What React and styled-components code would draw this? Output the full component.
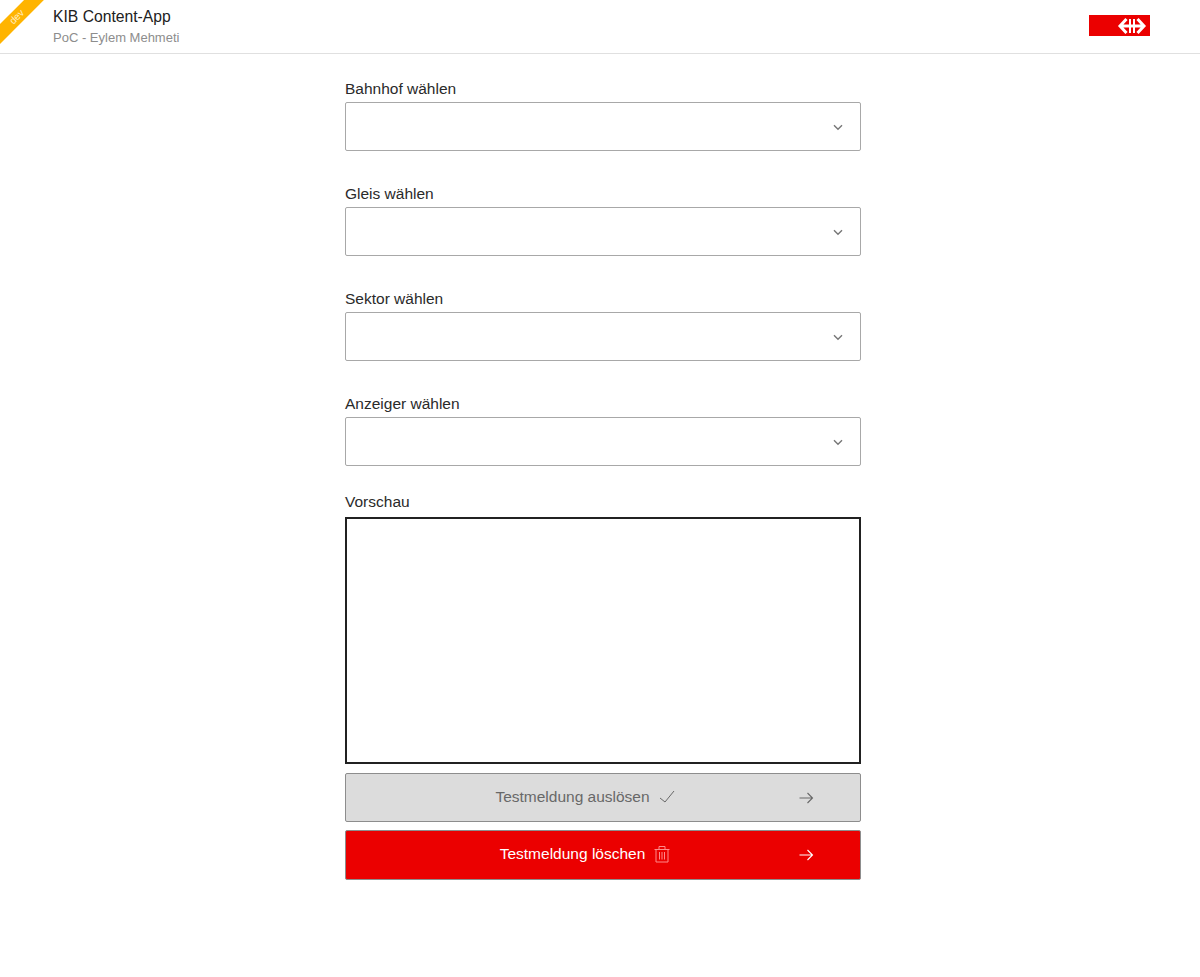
import React from 'react';
import styled, { createGlobalStyle } from 'styled-components';

const GlobalStyle = createGlobalStyle`
  html, body {
    margin: 0;
    padding: 0;
    background: #fff;
    font-family: "Liberation Sans", Arial, sans-serif;
    color: #212121;
  }
  * { box-sizing: border-box; }
`;

const Page = styled.div`
  min-height: 977px;
`;

const Header = styled.header`
  position: relative;
  height: 54px;
  display: flex;
  align-items: center;
  justify-content: space-between;
  padding: 0 50px 0 53px;
  border-bottom: 1px solid #e0e0e0;
  overflow: hidden;
`;

const Ribbon = styled.div`
  position: absolute;
  top: 10px;
  left: -33px;
  width: 100px;
  height: 14px;
  background: #ffb400;
  color: #ffedc2;
  font-size: 10px;
  line-height: 14px;
  text-align: center;
  transform: rotate(-45deg);
`;

const Titles = styled.div`
  display: flex;
  flex-direction: column;
  gap: 2px;
  margin-bottom: 2px;
`;

const AppTitle = styled.div`
  font-size: 15.7px;
  line-height: 21px;
  color: #212121;
`;

const AppSub = styled.div`
  font-size: 13px;
  line-height: 17px;
  color: #8d8d8d;
`;

const Logo = styled.svg`
  display: block;
  width: 61px;
  height: 21px;
  margin-bottom: 3px;
`;

const Form = styled.main`
  width: 516px;
  margin-left: 345px;
  padding-top: 25px;
`;

const Field = styled.div`
  margin-bottom: ${(p) => p.$gap}px;
`;

const Label = styled.div`
  font-size: 15.5px;
  line-height: 20px;
  margin-bottom: ${(p) => p.$gap || 3}px;
  color: #2a2a2a;
`;

const Select = styled.div`
  height: 49px;
  border: 1px solid #a8a8a8;
  border-radius: 2px;
  background: #fff;
  display: flex;
  align-items: center;
  justify-content: flex-end;
  padding-right: 16px;
  color: #767676;
`;

const Preview = styled.div`
  height: 247px;
  border: 2px solid #212121;
  background: #fff;
`;

const Button = styled.button`
  width: 100%;
  height: ${(p) => p.$h}px;
  margin-top: ${(p) => p.$top}px;
  padding: 0 42px 0 30px;
  display: flex;
  align-items: center;
  border: 1px solid #8d8d8d;
  border-radius: 2px;
  background: ${(p) => (p.$danger ? '#eb0000' : '#dcdcdc')};
  color: ${(p) => (p.$danger ? '#fff' : '#686868')};
  font-family: inherit;
  font-size: 15.5px;
`;

const ButtonLabel = styled.span`
  flex: 1;
  display: flex;
  align-items: center;
  justify-content: center;
  gap: 9px;
  margin-bottom: 2px;
`;

const Chevron = () => (
  <svg width="12" height="12" viewBox="0 0 12 12" fill="none" stroke="currentColor" strokeWidth="1.4">
    <path d="M2 4.200l4 4 4-4" />
  </svg>
);

const Check = () => (
  <svg width="16" height="16" viewBox="0 0 16 16" fill="none" stroke="currentColor" strokeWidth="1">
    <path d="M1 9l5 4L15 2" />
  </svg>
);

const Trash = () => (
  <svg width="16" height="18" viewBox="0 0 16 18" fill="none" stroke="#ff8a8a" strokeWidth="1">
    <path d="M.5 4.500h15M5 4.500V1.500h6v3M2 4.500v12.500h12V4.500M5.500 7v7.500M8 7v7.500M10.500 7v7.500" />
  </svg>
);

const Arrow = () => (
  <svg width="24" height="16" viewBox="0 0 24 16" fill="none" stroke="currentColor" strokeWidth="1.1">
    <path d="M5.500 8h13M13.500 3l5 5-5 5" />
  </svg>
);

const fields = ['Bahnhof wählen', 'Gleis wählen', 'Sektor wählen'];

export default function App() {
  return (
    <Page>
      <GlobalStyle />
      <Header>
        <Ribbon>dev</Ribbon>
        <Titles>
          <AppTitle>KIB Content-App</AppTitle>
          <AppSub>PoC - Eylem Mehmeti</AppSub>
        </Titles>
        <Logo viewBox="0 0 61 21">
          <rect width="61" height="21" fill="#eb0000" />
          <g fill="none" stroke="#fff">
            <path strokeWidth="3" d="M37.500 4L31 11l6.500 7M48.500 4L55 11l-6.500 7M31 11h24" />
            <path strokeWidth="2" d="M41 4v14M45 4v14" />
          </g>
        </Logo>
      </Header>
      <Form>
        {fields.map((name) => (
          <Field key={name} $gap={33}>
            <Label>{name}</Label>
            <Select>
              <Chevron />
            </Select>
          </Field>
        ))}
        <Field $gap={26}>
          <Label>Anzeiger wählen</Label>
          <Select>
            <Chevron />
          </Select>
        </Field>
        <Label $gap={5}>Vorschau</Label>
        <Preview />
        <Button $top={9} $h={49}>
          <ButtonLabel>
            Testmeldung auslösen <Check />
          </ButtonLabel>
          <Arrow />
        </Button>
        <Button $top={8} $h={50} $danger>
          <ButtonLabel>
            Testmeldung löschen <Trash />
          </ButtonLabel>
          <Arrow />
        </Button>
      </Form>
    </Page>
  );
}
